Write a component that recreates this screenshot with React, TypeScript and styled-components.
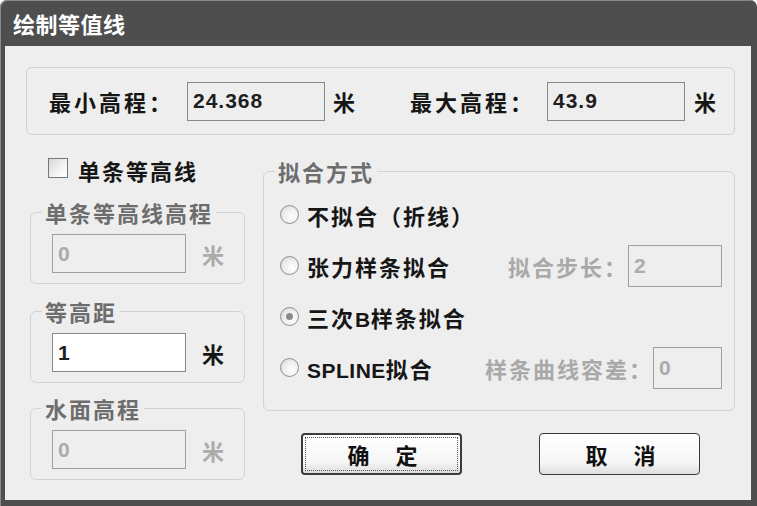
import React from "react";
import styled, { createGlobalStyle } from "styled-components";

const Global = createGlobalStyle`
  html, body { margin: 0; padding: 0; background: #ffffff; }
  * { box-sizing: border-box; }
`;

const CJK = `"Noto Sans CJK SC", "Noto Sans", sans-serif`;
const LATIN = `"Liberation Sans", "Noto Sans CJK SC", sans-serif`;

const Window = styled.div`
  width: 757px;
  height: 506px;
  display: flex;
  flex-direction: column;
  background: #4e4e4e;
  border-radius: 7px 7px 0 0;
  padding: 0 6px 6px 5px;
  box-shadow: inset 1px 1px 0 #8a8a8a;
  font-family: ${CJK};
`;

const TitleBar = styled.div`
  height: 46px;
  display: flex;
  align-items: center;
  padding-left: 8px;
  color: #ffffff;
  font-size: 22px;
  font-weight: 700;
  letter-spacing: 0.5px;
`;

const Body = styled.div`
  flex: 1;
  background: #eeeeee;
  padding: 21px 16px 0 21px;
  display: flex;
  flex-direction: column;
`;

const TopGroup = styled.div`
  height: 68px;
  border: 1px solid #d2d2d2;
  border-radius: 6px;
  display: flex;
  align-items: center;
  padding-left: 22px;
`;

const Pair = styled.div<{ $offset?: number }>`
  display: flex;
  align-items: center;
  margin-left: ${(p) => p.$offset ?? 0}px;
`;

const Label = styled.span<{ $width?: number; $disabled?: boolean }>`
  display: inline-block;
  width: ${(p) => (p.$width ? `${p.$width}px` : "auto")};
  font-size: 22px;
  font-weight: 700;
  letter-spacing: ${(p) => (p.$width ? 3 : 2)}px;
  color: ${(p) => (p.$disabled ? "#a9a9a9" : "#161616")};
  white-space: nowrap;
`;

const TextBox = styled.input<{ $w: number; $h?: number; $white?: boolean }>`
  width: ${(p) => p.$w}px;
  height: ${(p) => p.$h ?? 39}px;
  margin: 0;
  border: 1px solid ${(p) => (p.disabled ? "#a0a0a0" : "#878787")};
  background: ${(p) => (p.$white ? "#ffffff" : "#eeeeee")};
  padding: 0 0 0 5px;
  font-family: ${LATIN};
  font-size: 21px;
  font-weight: 700;
  letter-spacing: 1px;
  color: #1e1e1e;
  outline: none;
  &:disabled {
    color: #ababab;
    -webkit-text-fill-color: #ababab;
    opacity: 1;
  }
`;

const Unit = styled.span<{ $gap: number; $disabled?: boolean }>`
  margin-left: ${(p) => p.$gap}px;
  font-size: 22px;
  font-weight: 700;
  color: ${(p) => (p.$disabled ? "#ababab" : "#161616")};
`;

const Lower = styled.div`
  display: flex;
  gap: 18px;
  margin-left: 4px;
`;

const LeftCol = styled.div`
  width: 215px;
  display: flex;
  flex-direction: column;
`;

const RightCol = styled.div`
  width: 472px;
  display: flex;
  flex-direction: column;
  padding-top: 25px;
`;

const CheckRow = styled.label`
  height: 28px;
  margin-top: 21px;
  display: flex;
  align-items: center;
  gap: 10px;
  padding-left: 18px;
`;

const CheckBox = styled.span`
  width: 20px;
  height: 20px;
  border: 1px solid #767676;
  background: linear-gradient(135deg, #d6d6d6 0%, #f4f4f4 60%, #ffffff 100%);
  margin-top: -5px;
`;

const Group = styled.fieldset<{ $top: number }>`
  margin: ${(p) => p.$top}px 0 0 0;
  padding: 0;
  min-width: 0;
  border: 1px solid #d2d2d2;
  border-radius: 6px;
`;

const Legend = styled.legend`
  margin-left: 11px;
  padding: 0 3px;
  font-size: 22px;
  line-height: 22px;
  font-weight: 700;
  letter-spacing: 2px;
  color: #6d6d6d;
`;

const GroupBody = styled.div`
  display: flex;
  align-items: center;
  padding: 11px 10px 10px 21px;
`;

const RadioList = styled.div`
  display: flex;
  flex-direction: column;
  padding: 7px 12px 17px 16px;
`;

const RadioRow = styled.div`
  height: 51px;
  display: flex;
  align-items: center;
`;

const Radio = styled.span<{ $checked?: boolean }>`
  width: 19px;
  height: 19px;
  border-radius: 50%;
  border: 1px solid #8f8f8f;
  background: radial-gradient(circle at 65% 65%, #ffffff 0%, #ececec 55%, #cfcfcf 100%);
  display: flex;
  align-items: center;
  justify-content: center;
  margin-right: 8px;
  flex: none;
  &::after {
    content: "";
    width: 7px;
    height: 7px;
    border-radius: 50%;
    background: ${(p) => (p.$checked ? "#8a8a8a" : "transparent")};
  }
`;

const RadioText = styled.span`
  font-size: 22px;
  font-weight: 700;
  letter-spacing: 2px;
  color: #161616;
  white-space: nowrap;
`;

const Latin = styled.span`
  font-family: ${LATIN};
  font-size: 21px;
  letter-spacing: 0.5px;
`;

const Spacer = styled.div`
  flex: 1;
`;

const Buttons = styled.div`
  display: flex;
  margin-top: 22px;
  padding-left: 38px;
  gap: 77px;
`;

const Button = styled.button<{ $default?: boolean }>`
  width: 161px;
  height: 42px;
  margin: 0;
  padding: 0 0 0 4px;
  border: ${(p) => (p.$default ? "2px solid #3c3c3c" : "1px solid #3a3a3a")};
  border-radius: 4px;
  background: linear-gradient(#ffffff 0%, #f6f6f6 70%, #dedede 100%);
  font-family: ${CJK};
  font-size: 22px;
  font-weight: 700;
  letter-spacing: 2px;
  color: #111111;
  white-space: pre;
  outline: ${(p) => (p.$default ? "1px dotted #555" : "none")};
  outline-offset: -5px;
`;

export default function App() {
  return (
    <>
      <Global />
      <Window>
        <TitleBar>绘制等值线</TitleBar>
        <Body>
          <TopGroup>
            <Pair>
              <Label $width={138}>最小高程：</Label>
              <TextBox $w={138} readOnly value="24.368" />
              <Unit $gap={8}>米</Unit>
            </Pair>
            <Pair $offset={55}>
              <Label $width={137}>最大高程：</Label>
              <TextBox $w={138} readOnly value="43.9" />
              <Unit $gap={9}>米</Unit>
            </Pair>
          </TopGroup>
          <Lower>
            <LeftCol>
              <CheckRow>
                <CheckBox />
                <Label>单条等高线</Label>
              </CheckRow>
              <Group $top={17}>
                <Legend>单条等高线高程</Legend>
                <GroupBody>
                  <TextBox $w={134} disabled value="0" readOnly />
                  <Unit $gap={16} $disabled>米</Unit>
                </GroupBody>
              </Group>
              <Group $top={16}>
                <Legend>等高距</Legend>
                <GroupBody>
                  <TextBox $w={134} $white readOnly value="1" />
                  <Unit $gap={16}>米</Unit>
                </GroupBody>
              </Group>
              <Group $top={14}>
                <Legend>水面高程</Legend>
                <GroupBody>
                  <TextBox $w={134} disabled value="0" readOnly />
                  <Unit $gap={16} $disabled>米</Unit>
                </GroupBody>
              </Group>
            </LeftCol>
            <RightCol>
              <Group $top={0}>
                <Legend>拟合方式</Legend>
                <RadioList>
                  <RadioRow>
                    <Radio />
                    <RadioText>不拟合（折线）</RadioText>
                  </RadioRow>
                  <RadioRow>
                    <Radio />
                    <RadioText>张力样条拟合</RadioText>
                    <Spacer />
                    <Label $disabled>拟合步长：</Label>
                    <TextBox $w={94} $h={42} disabled value="2" readOnly />
                  </RadioRow>
                  <RadioRow>
                    <Radio $checked />
                    <RadioText>
                      三次<Latin>B</Latin>样条拟合
                    </RadioText>
                  </RadioRow>
                  <RadioRow>
                    <Radio />
                    <RadioText>
                      <Latin>SPLINE</Latin>拟合
                    </RadioText>
                    <Spacer />
                    <Label $disabled>样条曲线容差：</Label>
                    <TextBox $w={69} $h={42} disabled value="0" readOnly />
                  </RadioRow>
                </RadioList>
              </Group>
              <Buttons>
                <Button $default>确　定</Button>
                <Button>取　消</Button>
              </Buttons>
            </RightCol>
          </Lower>
        </Body>
      </Window>
    </>
  );
}
